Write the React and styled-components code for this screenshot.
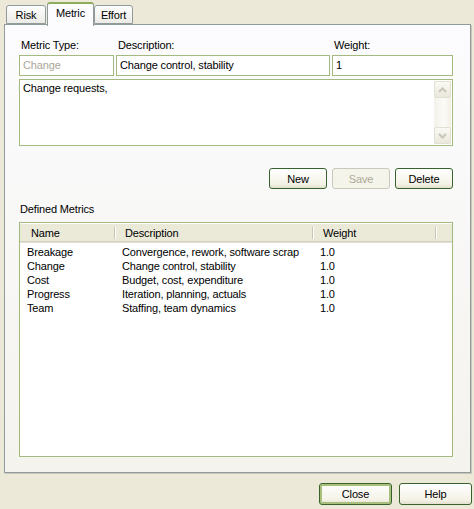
import React from 'react'
import styled, { createGlobalStyle } from 'styled-components'

const GlobalStyle = createGlobalStyle`
  html, body { margin: 0; padding: 0; background: #ECE9D8; }
  body { font-family: "Liberation Sans", Arial, sans-serif; font-size: 11px; letter-spacing: -0.15px; color: #000; }
  * { box-sizing: border-box; }
`;

const Dialog = styled.div`
  width: 474px;
  height: 509px;
  background: #ECE9D8;
  padding: 2px 2px 0 4px;
  display: flex;
  flex-direction: column;
`;

const TabStrip = styled.div`
  display: flex;
  align-items: flex-end;
  height: 22px;
  padding-left: 2px;
  position: relative;
  z-index: 2;
`;

const Tab = styled.div`
  height: ${p => (p.active ? '24px' : '19px')};
  margin-bottom: ${p => (p.active ? '-2px' : '0')};
  padding-top: 3px;
  width: ${p => p.w}px;
  margin-left: ${p => (p.active ? '1px' : '0')};
  text-align: center;
  border: 1px solid #919B9C;
  border-bottom: ${p => (p.active ? 'none' : '1px solid #919B9C')};
  border-top: ${p => (p.active ? '2px solid #8FAC5C' : '1px solid #919B9C')};
  border-radius: 3px 3px 0 0;
  background: ${p => (p.active ? '#FCFCFE' : 'linear-gradient(#FEFEFE, #ECEBE6)')};
`;

const Panel = styled.div`
  height: 449px;
  width: 467px;
  border: 1px solid #919B9C;
  box-shadow: 1px 1px 0 #C9C7BA;
  background: linear-gradient(#FCFCFE, #F4F3EE);
  padding: 13px 17px 15px 14px;
  display: flex;
  flex-direction: column;
`;

const FieldRow = styled.div`
  display: grid;
  grid-template-columns: 95px 214px 1fr;
  column-gap: 2px;
  margin-top: ${p => p.top || 0}px;
`;

const Label = styled.div`
  height: 14px;
  line-height: 14px;
  padding-left: ${p => p.pad || 1}px;
  white-space: nowrap;
`;

const Input = styled.div`
  height: 21px;
  line-height: 19px;
  border: 1px solid #A4B97F;
  background: #fff;
  padding-left: 3px;
  color: ${p => (p.disabled ? '#ACA899' : '#000')};
  white-space: nowrap;
  overflow: hidden;
`;

const Memo = styled.div`
  margin-top: 3px;
  height: 67px;
  border: 1px solid #A4B97F;
  background: #fff;
  display: flex;
`;

const MemoText = styled.div`
  flex: 1;
  padding: 2px 3px;
  line-height: 13px;
`;

const ScrollBar = styled.div`
  width: 17px;
  margin: 1px 1px 1px 0;
  background: linear-gradient(90deg, #F3F1EA, #FBFAF6 60%, #F1EFE6);
  display: flex;
  flex-direction: column;
  justify-content: space-between;
`;

const ScrollBtn = styled.div`
  height: 17px;
  border: 1px solid #E2DFD3;
  border-radius: 2px;
  background: linear-gradient(#FAF9F4, #EAE8DC);
  display: flex;
  align-items: center;
  justify-content: center;
`;

const ButtonRow = styled.div`
  display: flex;
  justify-content: flex-end;
  gap: ${p => p.gap || 5}px;
  margin-top: ${p => p.top || 0}px;
`;

const Button = styled.button`
  width: ${p => p.w || 58}px;
  height: ${p => p.h || 21}px;
  font-family: "Liberation Sans", Arial, sans-serif;
  font-size: 11px;
  letter-spacing: -0.15px;
  padding: 0;
  border-radius: 3px;
  border: 1px solid ${p => (p.disabled ? '#CAC8BB' : '#37622B')};
  color: ${p => (p.disabled ? '#ACA899' : '#000')};
  background: ${p => (p.disabled ? '#F5F4EA' : 'linear-gradient(#FFFFFF, #F4F2E6 80%, #E3E0CF)')};
  box-shadow: ${p => (p.primary ? 'inset 0 0 0 2px #A9C07C' : 'none')};
`;

const SectionLabel = styled.div`
  margin-top: 14px;
  height: 13px;
  line-height: 13px;
  padding-left: 1px;
`;

const ListBox = styled.div`
  margin-top: 6px;
  height: 235px;
  border: 1px solid #A4B97F;
  background: #fff;
  padding: 1px 0 0;
`;

const Cols = '95px 198px 123px 1fr';

const Header = styled.div`
  display: grid;
  grid-template-columns: ${Cols};
  height: 18px;
  background: #EBEAD9;
  border-bottom: 1px solid #D6D2C2;
  box-shadow: 0 1px 0 #E2DFD1;
`;

const HeadCell = styled.div`
  line-height: 19px;
  padding-left: ${p => p.pad}px;
  position: relative;
  &::after {
    content: '';
    display: ${p => (p.sep ? 'block' : 'none')};
    position: absolute;
    right: 0;
    top: 3px;
    height: 12px;
    width: 1px;
    background: #C7C5B2;
    box-shadow: 1px 0 0 #fff;
  }
`;

const Rows = styled.div`
  padding-top: 3px;
`;

const Row = styled.div`
  display: grid;
  grid-template-columns: ${Cols};
  height: 14px;
  line-height: 14px;
`;

const Cell = styled.div`
  padding-left: ${p => p.pad}px;
  white-space: nowrap;
`;

const Footer = styled.div`
  margin-top: 10px;
`;

const metrics = [
  ['Breakage', 'Convergence, rework, software scrap', '1.0'],
  ['Change', 'Change control, stability', '1.0'],
  ['Cost', 'Budget, cost, expenditure', '1.0'],
  ['Progress', 'Iteration, planning, actuals', '1.0'],
  ['Team', 'Staffing, team dynamics', '1.0'],
];

const Arrow = ({ up }) => (
  <svg width="9" height="6" viewBox="0 0 9 6">
    <path d={up ? 'M1 5 L4.5 1.5 L8 5' : 'M1 1 L4.5 4.5 L8 1'} fill="none" stroke="#C8C6B6" strokeWidth="2" />
  </svg>
);

export default function App() {
  return (
    <>
      <GlobalStyle />
      <Dialog>
        <TabStrip>
          <Tab w={40}>Risk</Tab>
          <Tab w={47} active>Metric</Tab>
          <Tab w={39}>Effort</Tab>
        </TabStrip>
        <Panel>
          <FieldRow>
            <Label pad={2}>Metric Type:</Label>
            <Label pad={2}>Description:</Label>
            <Label pad={2}>Weight:</Label>
          </FieldRow>
          <FieldRow top={3}>
            <Input disabled>Change</Input>
            <Input>Change control, stability</Input>
            <Input>1</Input>
          </FieldRow>
          <Memo>
            <MemoText>Change requests,</MemoText>
            <ScrollBar>
              <ScrollBtn><Arrow up /></ScrollBtn>
              <ScrollBtn><Arrow /></ScrollBtn>
            </ScrollBar>
          </Memo>
          <ButtonRow top={22}>
            <Button>New</Button>
            <Button disabled>Save</Button>
            <Button>Delete</Button>
          </ButtonRow>
          <SectionLabel>Defined Metrics</SectionLabel>
          <ListBox>
            <Header>
              <HeadCell pad={11} sep>Name</HeadCell>
              <HeadCell pad={10} sep>Description</HeadCell>
              <HeadCell pad={10} sep>Weight</HeadCell>
              <HeadCell />
            </Header>
            <Rows>
              {metrics.map(m => (
                <Row key={m[0]}>
                  <Cell pad={7}>{m[0]}</Cell>
                  <Cell pad={7}>{m[1]}</Cell>
                  <Cell pad={7}>{m[2]}</Cell>
                  <Cell />
                </Row>
              ))}
            </Rows>
          </ListBox>
        </Panel>
        <Footer>
          <ButtonRow gap={7}>
            <Button w={73} h={22} primary>Close</Button>
            <Button w={73} h={22}>Help</Button>
          </ButtonRow>
        </Footer>
      </Dialog>
    </>
  )
}
